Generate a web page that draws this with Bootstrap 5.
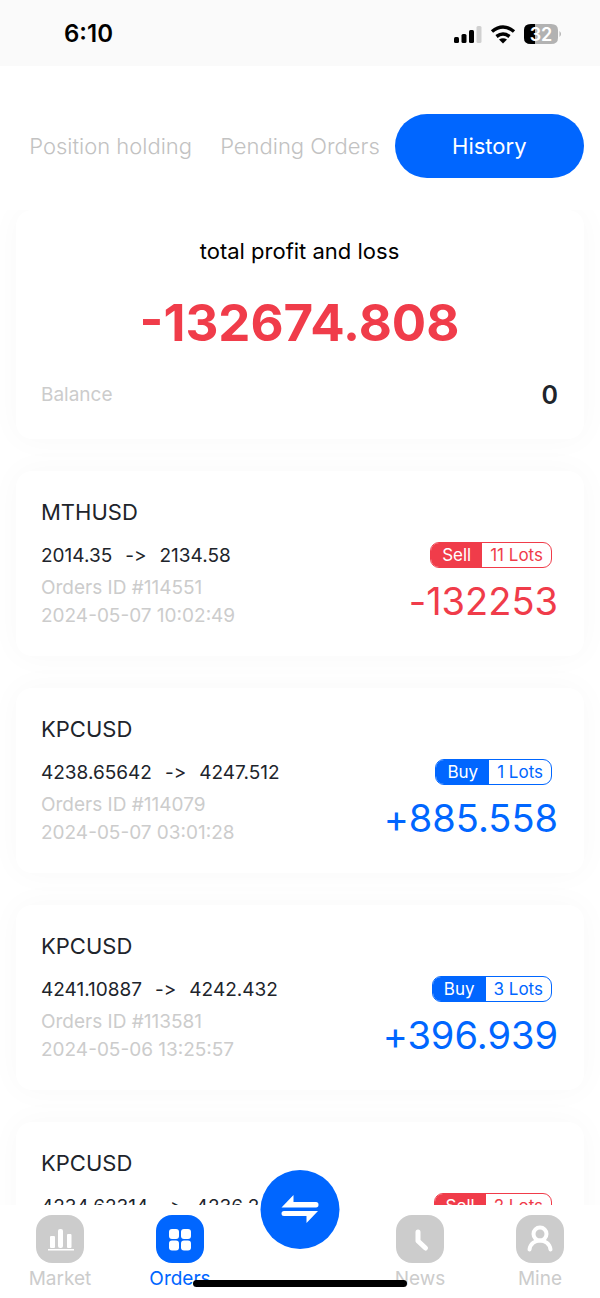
<!DOCTYPE html>
<html lang="en">
<head>
<meta charset="utf-8">
<meta name="viewport" content="width=device-width, initial-scale=1">
<title>Orders</title>
<link href="https://cdn.jsdelivr.net/npm/bootstrap@5.3.0/dist/css/bootstrap.min.css" rel="stylesheet">
<style>
  :root { --brand: #0066ff; --loss: #f03c4a; --muted: #cccccc; --ink: #20242b; }
  body { font-family: Inter, "Liberation Sans", sans-serif; color: var(--ink); background: #fff; }
  .status-bar { height: 66px; background: #fafafa; color: #000; padding: 2px 38px 0 64px; }
  .clock { font-size: 24px; font-weight: 600; line-height: 28px; }
  .tab-row { padding: 48px 16px 32px; }
  .tab-row .nav-link { font-size: 22px; font-weight: 300; line-height: 32px; height: 64px; padding: 16px 0; border-radius: 32px; color: #c2c2c2; white-space: nowrap; }
  .tab-row .nav-link.active { background: var(--brand); color: #fff; font-weight: 400; }
  .feed { min-height: 0; overflow: hidden; padding: 0 16px; gap: 32px; }
  .panel { background: #fff; border-radius: 16px; box-shadow: 0 0 32px rgba(0, 0, 0, .03); padding: 25px 26px 26px 25px; flex: none; }
  .total-label { font-size: 22px; line-height: 32px; color: #000; }
  .total-value { font-size: 51px; font-weight: 700; line-height: 60px; color: var(--loss); margin: 26px 0 26px; }
  .balance-row { line-height: 32px; padding-bottom: 2px; }
  .muted-text { color: var(--muted); font-size: 19px; }
  .balance-value { font-size: 25px; font-weight: 600; }
  .pair { font-size: 22px; line-height: 32px; }
  .prices { font-size: 19px; line-height: 28px; margin: 14px 0 4px; gap: 13px; font-feature-settings: "calt" 0; }
  .meta-line { line-height: 28px; }
  .side-buy { --tone: var(--brand); }
  .side-sell { --tone: var(--loss); }
  .deal { padding-top: 46px; }
  .lot-tag { border: 1px solid var(--tone); border-radius: 9px; overflow: hidden; font-size: 17px; line-height: 24px; margin-right: 6px; color: var(--tone); }
  .lot-tag span { padding: 0 8px; }
  .lot-tag .lot-side { background: var(--tone); color: #fff; padding: 0 11px; }
  .amount { font-size: 38px; line-height: 48px; color: var(--tone); margin-top: 9px; font-feature-settings: "calt" 0; }
  .tab-bar { background: #fff; height: 93px; padding-top: 10px; z-index: 1; }
  .tab-bar a { color: var(--muted); font-size: 19px; line-height: 24px; text-decoration: none; }
  .tab-bar a.active { color: var(--brand); }
  .tab-bar svg { display: block; margin-bottom: 4px; }
  .trade-btn { width: 79px; height: 79px; top: -35px; left: 50%; transform: translateX(-50%); background: var(--brand); }
  .home-bar { width: 214px; height: 7px; bottom: 11px; left: 50%; transform: translateX(-50%); background: #000; }
</style>
</head>
<body>
<div class="vh-100 d-flex flex-column overflow-hidden">
  <header class="status-bar d-flex align-items-center justify-content-between flex-shrink-0">
    <span class="clock">6:10</span>
    <svg width="108" height="24" viewBox="0 0 108 24" role="img" aria-label="Signal, Wi-Fi, battery 32 percent">
      <rect x="0" y="15" width="5" height="6" rx="1.5"/><rect x="7.500" y="12" width="5" height="9" rx="1.5"/><rect x="15" y="8" width="5" height="13" rx="1.5"/><rect x="22.500" y="4" width="5" height="17" rx="1.5" fill="#d0d0d0"/>
      <path d="M38 9.500q11-9 22 0M42.500 14.500q6.500-5 13 0" fill="none" stroke="#000" stroke-width="3.500"/>
      <path d="M45 17.500q4-2.500 8 0l-4 4z"/>
      <path d="M77 2h20q7 0 7 6v8q0 6-7 6H77q-7 0-7-6V8q0-6 7-6z" fill="#b2b2b2"/>
      <path d="M77 2h4v20h-4q-7 0-7-6V8q0-6 7-6z"/>
      <path d="M105.500 9q3 3 0 6z" fill="#b2b2b2"/>
      <text x="87" y="18.500" text-anchor="middle" font-size="18" font-weight="600" fill="#fff">32</text>
    </svg>
  </header>

  <nav class="tab-row nav row g-0 flex-shrink-0" aria-label="Order lists">
    <a class="nav-link col text-center" href="#">Position holding</a>
    <a class="nav-link col text-center" href="#">Pending Orders</a>
    <a class="nav-link col text-center active" href="#" aria-current="page">History</a>
  </nav>

  <main class="feed flex-grow-1 d-flex flex-column">
    <section class="panel">
      <div class="total-label text-center">total profit and loss</div>
      <div class="total-value text-center">-132674.808</div>
      <div class="balance-row d-flex justify-content-between align-items-center">
        <span class="muted-text">Balance</span><span class="balance-value">0</span>
      </div>
    </section>

    <article class="panel side-sell d-flex justify-content-between align-items-start">
      <div>
        <div class="pair">MTHUSD</div>
        <div class="prices d-flex"><span>2014.35</span><span>-&gt;</span><span>2134.58</span></div>
        <div class="meta-line muted-text">Orders ID #114551</div>
        <div class="meta-line muted-text">2024-05-07 10:02:49</div>
      </div>
      <div class="deal d-flex flex-column align-items-end">
        <div class="lot-tag d-flex"><span class="lot-side">Sell</span><span>11 Lots</span></div>
        <div class="amount">-132253</div>
      </div>
    </article>

    <article class="panel side-buy d-flex justify-content-between align-items-start">
      <div>
        <div class="pair">KPCUSD</div>
        <div class="prices d-flex"><span>4238.65642</span><span>-&gt;</span><span>4247.512</span></div>
        <div class="meta-line muted-text">Orders ID #114079</div>
        <div class="meta-line muted-text">2024-05-07 03:01:28</div>
      </div>
      <div class="deal d-flex flex-column align-items-end">
        <div class="lot-tag d-flex"><span class="lot-side">Buy</span><span>1 Lots</span></div>
        <div class="amount">+885.558</div>
      </div>
    </article>

    <article class="panel side-buy d-flex justify-content-between align-items-start">
      <div>
        <div class="pair">KPCUSD</div>
        <div class="prices d-flex"><span>4241.10887</span><span>-&gt;</span><span>4242.432</span></div>
        <div class="meta-line muted-text">Orders ID #113581</div>
        <div class="meta-line muted-text">2024-05-06 13:25:57</div>
      </div>
      <div class="deal d-flex flex-column align-items-end">
        <div class="lot-tag d-flex"><span class="lot-side">Buy</span><span>3 Lots</span></div>
        <div class="amount">+396.939</div>
      </div>
    </article>

    <article class="panel side-sell d-flex justify-content-between align-items-start">
      <div>
        <div class="pair">KPCUSD</div>
        <div class="prices d-flex"><span>4234.62314</span><span>-&gt;</span><span>4236.2</span></div>
      </div>
      <div class="deal d-flex flex-column align-items-end">
        <div class="lot-tag d-flex"><span class="lot-side">Sell</span><span>2 Lots</span></div>
      </div>
    </article>
  </main>

  <nav class="tab-bar row g-0 position-relative flex-shrink-0" aria-label="Main">
    <a class="col d-flex flex-column align-items-center" href="#">
      <svg width="48" height="48" viewBox="0 0 48 48" aria-hidden="true"><rect width="48" height="48" rx="16" fill="#ccc"/><g fill="#fff"><rect x="14" y="21" width="5" height="12" rx="1"/><rect x="22" y="14" width="5" height="19" rx="2"/><rect x="31" y="19" width="4.500" height="14" rx="1"/><rect x="12" y="34" width="26" height="1.500"/></g></svg>
      Market
    </a>
    <a class="col d-flex flex-column align-items-center active" href="#" aria-current="page">
      <svg width="48" height="48" viewBox="0 0 48 48" aria-hidden="true"><rect width="48" height="48" rx="16" fill="#06f"/><g fill="#fff"><rect x="13" y="14" width="10" height="10" rx="3"/><rect x="25" y="14" width="10" height="10" rx="3"/><rect x="13" y="25.500" width="10" height="10" rx="3"/><rect x="25" y="25.500" width="10" height="10" rx="3"/></g></svg>
      Orders
    </a>
    <div class="col"></div>
    <a class="col d-flex flex-column align-items-center" href="#">
      <svg width="48" height="48" viewBox="0 0 48 48" aria-hidden="true"><rect width="48" height="48" rx="16" fill="#ccc"/><path d="M22 17v9l7.500 7" fill="none" stroke="#fff" stroke-width="5" stroke-linecap="round" stroke-linejoin="round"/></svg>
      News
    </a>
    <a class="col d-flex flex-column align-items-center" href="#">
      <svg width="48" height="48" viewBox="0 0 48 48" aria-hidden="true"><rect width="48" height="48" rx="16" fill="#ccc"/><g fill="none" stroke="#fff" stroke-width="4"><circle cx="24" cy="19" r="6.500"/><path d="M13.500 34.500c1.500-12 19.500-12 21 0" stroke-linecap="round"/></g></svg>
      Mine
    </a>
    <button type="button" class="trade-btn btn position-absolute rounded-circle p-0 border-0" aria-label="Trade">
      <svg class="m-0" width="79" height="79" viewBox="0 0 79 79" aria-hidden="true"><path d="M21 37.500L33 25v7h22.500q2.500 0 2.500 2.700t-2.500 2.800zM57.500 41L46 53v-7H23.500q-2.500 0-2.500-2.500t2.500-2.500z" fill="#fff"/></svg>
    </button>
    <div class="home-bar position-absolute rounded-pill"></div>
  </nav>
</div>
<script src="https://cdn.jsdelivr.net/npm/bootstrap@5.3.0/dist/js/bootstrap.bundle.min.js"></script>
</body>
</html>
